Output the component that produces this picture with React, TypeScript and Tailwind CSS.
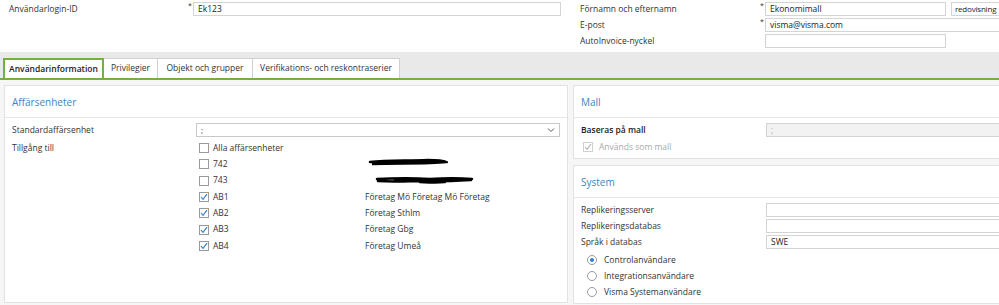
import React from 'react';

const font = "font-['Segoe_UI','Open_Sans',sans-serif]";

const Input = ({ value = '', w, disabled = false }: { value?: string; w: string; disabled?: boolean }) => (
  <div
    className={`${w} shrink-0 h-[14px] border border-[#d4d4d4] px-[4px] flex items-center text-[8.5px] leading-none whitespace-nowrap ${
      disabled ? 'bg-[#f2f2f2] text-[#aaa]' : 'bg-white text-[#222]'
    }`}
  >
    {value}
  </div>
);

const Check = ({ checked = false, disabled = false }: { checked?: boolean; disabled?: boolean }) => (
  <div
    className={`w-[10px] h-[10px] shrink-0 border ${disabled ? 'border-[#d0d0d0]' : 'border-[#9a9a9a]'} bg-white flex items-center justify-center`}
  >
    {checked && (
      <svg width="8" height="8" viewBox="0 0 8 8">
        <path d="M1 4.2 L3 6.3 L7 1.2" fill="none" stroke={disabled ? '#b5b5b5' : '#2a7fd4'} strokeWidth="1.1" />
      </svg>
    )}
  </div>
);

const Radio = ({ on = false }: { on?: boolean }) => (
  <div className="w-[10px] h-[10px] shrink-0 rounded-full border border-[#9a9a9a] bg-white flex items-center justify-center">
    {on && <div className="w-[4px] h-[4px] rounded-full bg-[#2a7fd4]" />}
  </div>
);

const PanelHeader = ({ title }: { title: string }) => (
  <div className="h-[32px] border-b border-[#e6e6e6] flex items-center px-[7px] text-[10px] text-[#3a86c4]">{title}</div>
);

const units = [
  { code: 'Alla affärsenheter', name: '', checked: false },
  { code: '742', name: '', checked: false },
  { code: '743', name: '', checked: false },
  { code: 'AB1', name: 'Företag Mö Företag Mö Företag', checked: true },
  { code: 'AB2', name: 'Företag Sthlm', checked: true },
  { code: 'AB3', name: 'Företag Gbg', checked: true },
  { code: 'AB4', name: 'Företag Umeå', checked: true },
];

const tabs = [
  { t: 'Användarinformation', w: 'w-[101px]' },
  { t: 'Privilegier', w: 'w-[54px]' },
  { t: 'Objekt och grupper', w: 'w-[95px]' },
  { t: 'Verifikations- och reskontraserier', w: 'w-[147px]' },
];

export default function App() {
  return (
    <div className={`w-[999px] h-[305px] overflow-hidden bg-white text-[8.5px] leading-none text-[#333] ${font}`}>
      {/* top form */}
      <div className="h-[52px] flex pt-[2px]">
        <div className="w-[580px] shrink-0 flex items-start pl-[9px]">
          <div className="w-[179px] h-[14px] flex items-center">Användarlogin-ID</div>
          <div className="w-[5px] text-[7px] leading-none">*</div>
          <Input value="Ek123" w="w-[368px]" />
        </div>
        <div className="flex-1 min-w-0 overflow-hidden flex flex-col gap-[2px]">
          <div className="flex">
            <div className="w-[180px] shrink-0 h-[14px] flex items-center">Förnamn och efternamn</div>
            <div className="w-[5px] shrink-0 text-[7px] leading-none">*</div>
            <Input value="Ekonomimall" w="w-[181px]" />
            <div className="w-[5px] shrink-0" />
            <div className="w-[60px] shrink-0 h-[14px] border border-[#d4d4d4] pl-[3px] flex items-center text-[8px] tracking-[-0.2px] text-[#222] bg-white whitespace-nowrap">
              redovisning
            </div>
          </div>
          <div className="flex">
            <div className="w-[180px] shrink-0 h-[14px] flex items-center">E-post</div>
            <div className="w-[5px] shrink-0 text-[7px] leading-none">*</div>
            <Input value="visma@visma.com" w="w-[250px]" />
          </div>
          <div className="flex">
            <div className="w-[180px] shrink-0 h-[14px] flex items-center">AutoInvoice-nyckel</div>
            <div className="w-[5px] shrink-0" />
            <Input w="w-[181px]" />
          </div>
        </div>
      </div>

      {/* tabs */}
      <div className="h-[28px] bg-[#e9e9e9] flex items-end pl-[3px] border-b-2 border-[#72b043]">
        {tabs.map((t, i) => (
          <div
            key={t.t}
            className={`${t.w} h-[20px] flex items-center justify-center text-[8.5px] ${
              i === 0
                ? 'border-2 border-b-0 border-[#72b043] bg-white font-semibold text-[#222]'
                : 'border border-b-0 border-l-0 border-[#d0d0d0] bg-white text-[#333]'
            }`}
          >
            {t.t}
          </div>
        ))}
      </div>

      {/* content */}
      <div className="h-[225px] bg-[#f6f6f6] flex gap-[5px] pt-[5px] pl-[4px]">
        {/* left panel */}
        <div className="w-[564px] h-[218px] shrink-0 bg-white border border-[#e2e2e2]">
          <PanelHeader title="Affärsenheter" />
          <div className="px-[7px] pt-[5px]">
            <div className="flex items-center h-[14px]">
              <div className="w-[185px]">Standardaffärsenhet</div>
              <div className="w-[366px] h-[14px] border border-[#c8c8c8] bg-white px-[4px] flex items-center justify-between">
                <span className="text-[8px]">;</span>
                <svg width="8" height="6" viewBox="0 0 8 6">
                  <path d="M1 1.5 L4 4.5 L7 1.5" fill="none" stroke="#555" strokeWidth="1" />
                </svg>
              </div>
            </div>
            <div className="flex mt-[3px]">
              <div className="w-[187px] h-[16px] flex items-center">Tillgång till</div>
              <div className="flex flex-col">
                {units.map((u, i) => (
                  <div key={u.code} className="h-[16.3px] flex items-center">
                    <Check checked={u.checked} />
                    <div className="w-[156px] pl-[4px]">{u.code}</div>
                    <div className="relative">
                      {u.name}
                      {i === 1 && (
                        <svg className="absolute left-[3px] top-[-6px]" width="80" height="10" viewBox="0 0 80 10">
                          <path d="M2 4 C20 2 40 3 60 2 C70 2 76 3 78 4 C60 6 30 5 4 6 C20 4 50 4 75 4" fill="none" stroke="#000" strokeWidth="2.5" strokeLinecap="round" />
                        </svg>
                      )}
                      {i === 2 && (
                        <svg className="absolute left-[10px] top-[-6px]" width="100" height="12" viewBox="0 0 100 12">
                          <path d="M2 4 C20 3 40 3 55 4 C70 3 85 3 97 4 M3 6 C20 7 35 6 48 6 C60 7 80 6 96 5 M45 7 C55 8 65 7 70 7 M20 5 L90 5" fill="none" stroke="#000" strokeWidth="2.5" strokeLinecap="round" />
                        </svg>
                      )}
                    </div>
                  </div>
                ))}
              </div>
            </div>
          </div>
        </div>

        {/* right column */}
        <div className="flex-1 min-w-0 flex flex-col gap-[6px]">
          <div className="h-[74px] bg-white border border-r-0 border-[#e2e2e2] overflow-hidden">
            <PanelHeader title="Mall" />
            <div className="pl-[7px] pt-[5px]">
              <div className="flex items-center h-[14px]">
                <div className="w-[185px] shrink-0 text-[#222] font-semibold">Baseras på mall</div>
                <Input value=";" w="w-[260px]" disabled />
              </div>
              <div className="flex items-center h-[16px] mt-[2px] pl-[2px] gap-[6px] text-[#aaa]">
                <Check checked disabled />
                <span>Används som mall</span>
              </div>
            </div>
          </div>
          <div className="h-[139px] bg-white border border-r-0 border-[#e2e2e2] overflow-hidden">
            <PanelHeader title="System" />
            <div className="pl-[7px] pt-[5px] flex flex-col gap-[2px]">
              <div className="flex items-center h-[14px]">
                <div className="w-[185px] shrink-0">Replikeringsserver</div>
                <Input w="w-[260px]" />
              </div>
              <div className="flex items-center h-[14px]">
                <div className="w-[185px] shrink-0">Replikeringsdatabas</div>
                <Input w="w-[260px]" />
              </div>
              <div className="flex items-center h-[14px]">
                <div className="w-[185px] shrink-0">Språk i databas</div>
                <Input value="SWE" w="w-[260px]" />
              </div>
              <div className="flex flex-col pl-[6px] mt-[1px]">
                {['Controlanvändare', 'Integrationsanvändare', 'Visma Systemanvändare'].map((r, i) => (
                  <div key={r} className="h-[16px] flex items-center gap-[7px]">
                    <Radio on={i === 0} />
                    <span>{r}</span>
                  </div>
                ))}
              </div>
            </div>
          </div>
        </div>
      </div>
    </div>
  );
}
